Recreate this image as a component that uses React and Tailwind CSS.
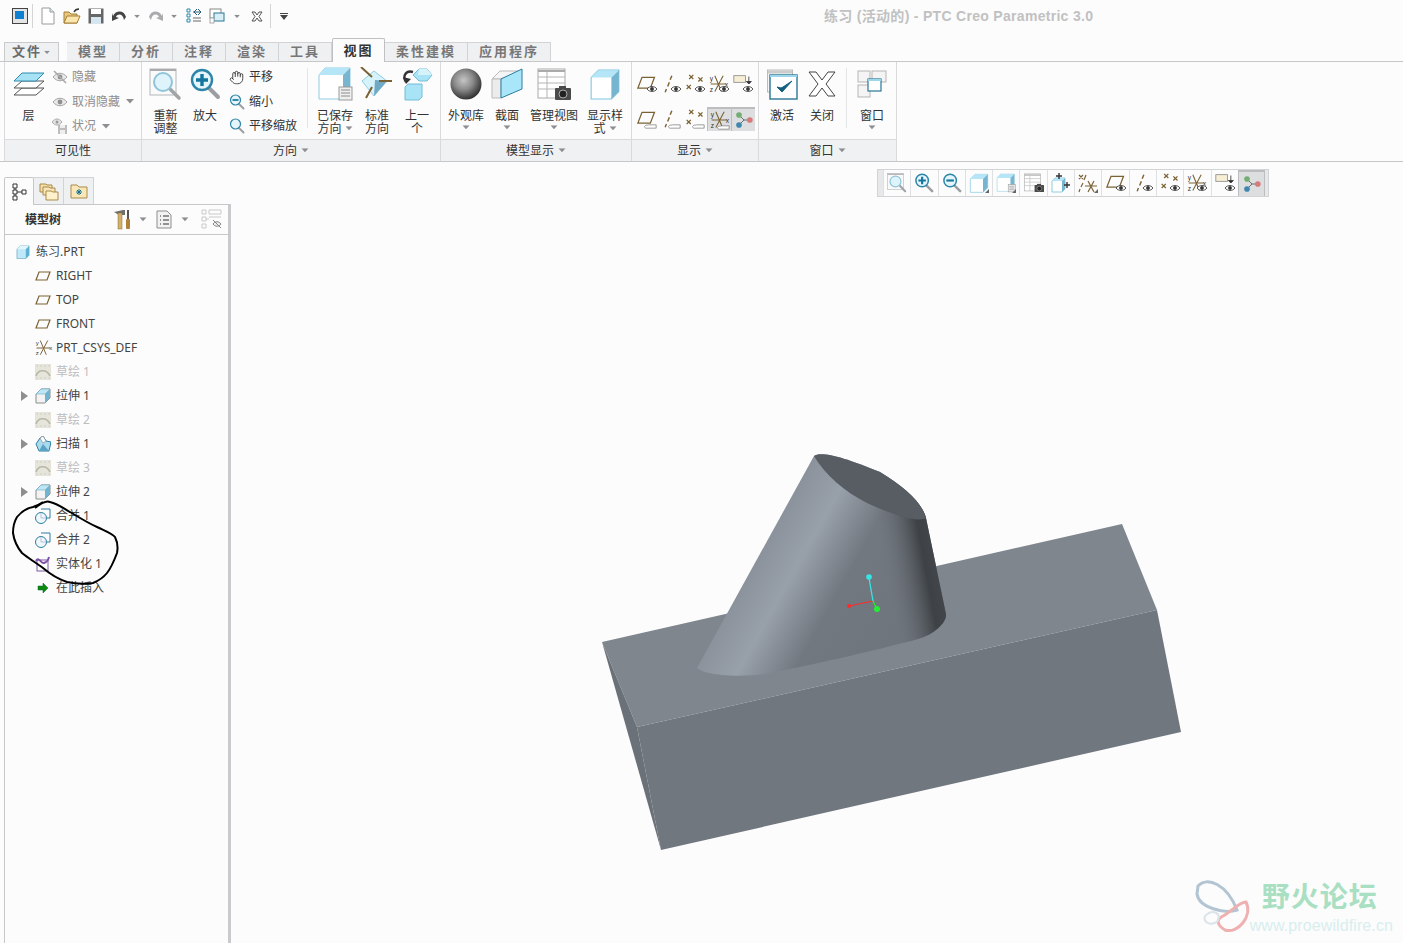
import { Hand } from "lucide-react"

const cjk = { fontFamily: '"Noto Sans", "Noto Sans CJK SC", sans-serif' }
const BROWN = "#7b6234"

function Caret({ className = "" }) {
  return (
    <svg width="8" height="5" viewBox="0 0 8 5" className={className}>
      <path d="M0 0h8L4 4.5z" fill="#8c8e91" />
    </svg>
  )
}

function Cube({ size = 30, front = "#fff", top = "#b5e6f8", side = "#76b5d0", stroke = "#7cc4df" }) {
  return (
    <svg width={size} height={size} viewBox="0 0 30 30">
      <path d="M2 9 9 2h19v20l-7 7H2z" fill={front} stroke={stroke} />
      <path d="M2 9 9 2h19l-7 7z" fill={top} />
      <path d="M21 9l7-7v20l-7 7z" fill={side} />
    </svg>
  )
}

/* ---------- toolbar icons ---------- */
function Magnifier({ size = 32, plus, minus }) {
  return (
    <svg width={size} height={size} viewBox="0 0 32 32">
      <path d="M19 19l10 10" stroke="#9b9fa3" strokeWidth="4" strokeLinecap="round" />
      <circle cx="13" cy="12" r="10" fill="#e4f5fb" stroke="#2d86a8" strokeWidth="2.4" />
      {plus && <path d="M13 6v12M7 12h12" stroke="#14769c" strokeWidth="3.4" />}
      {minus && <path d="M7 12h12" stroke="#14769c" strokeWidth="3.4" />}
    </svg>
  )
}

function Refit() {
  return (
    <svg width="33" height="33" viewBox="0 0 33 33">
      <rect x="1" y="1" width="26" height="26" fill="#fafafa" stroke="#b4b6b8" />
      <path d="M1 2h26" stroke="#a9abae" strokeWidth="2" />
      <path d="M20 20l10 10" stroke="#a1a5a8" strokeWidth="3.5" strokeLinecap="round" />
      <circle cx="14" cy="14" r="9" fill="#dff3fa" stroke="#8fc5d9" strokeWidth="2" />
    </svg>
  )
}

function Layers() {
  return (
    <svg width="32" height="26" viewBox="0 0 32 26">
      <path d="M1 24 9 17h22l-8 7z" fill="#fff" stroke="#555" />
      <path d="M1 17 9 10h22l-8 7z" fill="#fff" stroke="#555" />
      <path d="M1 10 9 2h22l-8 8z" fill="#a8e3f5" stroke="#2d8cb0" />
    </svg>
  )
}

function GrayEye({ slash }) {
  return (
    <svg width="16" height="14" viewBox="0 0 16 14">
      <path d="M1 7c4-5 10-5 14 0-4 5-10 5-14 0z" fill="#e8e8e8" stroke="#a5a5a5" />
      <circle cx="8" cy="7" r="2.4" fill="#8f8f8f" />
      {slash && <path d="M2 1l12 12" stroke="#a9a9a9" strokeWidth="1.6" />}
    </svg>
  )
}

function StatusIcon() {
  return (
    <svg width="16" height="16" viewBox="0 0 16 16">
      <path d="M0 4c3-4 7-4 10 0-3 4-7 4-10 0z" fill="#e5e5e5" stroke="#aaa" />
      <circle cx="5" cy="4" r="1.5" fill="#999" />
      <rect x="6" y="7" width="9" height="9" fill="#bdbdbd" />
      <rect x="8" y="7" width="5" height="3" fill="#eee" />
      <rect x="8" y="12" width="5" height="4" fill="#eee" />
    </svg>
  )
}

function SavedOrient() {
  return (
    <svg width="36" height="34" viewBox="0 0 36 34">
      <path d="M2 8 8 1h25v24l-7 7H2z" fill="#fff" stroke="#8fcce3" />
      <path d="M2 8 8 1h25l-7 7z" fill="#b5e6f8" />
      <path d="M26 8l7-7v24l-7 7z" fill="#79b5cf" />
      <rect x="22" y="20" width="13" height="13" fill="#efefef" stroke="#9a9a9a" />
      <path d="M24 23h9M24 26h9M24 29h9" stroke="#8b8b8b" />
    </svg>
  )
}

function StandardOrient() {
  return (
    <svg width="36" height="34" viewBox="0 0 36 34">
      <path d="M15 4 28 14 15 29 3 14z" fill="#d6f2fb" stroke="#8fcce3" />
      <path d="M16 13l12 1-13 15z" fill="#6fa9c3" />
      <path d="M2 0l11 10M20 14h13M13 20 7 31" stroke={BROWN} strokeWidth="2" />
    </svg>
  )
}

function PrevOrient() {
  return (
    <svg width="32" height="34" viewBox="0 0 32 34">
      <path d="M12 8l6-6h8l5 6-5 6h-8z" fill="#a9e3f6" stroke="#72bcd8" />
      <path d="M18 2l8 0 5 6h-14z" fill="#d6f2fb" />
      <path d="M4 20l3-3h14v13l-3 3H4z" fill="#a9e3f6" stroke="#72bcd8" />
      <path d="M5 15C1 9 5 3 12 5" fill="none" stroke="#333" strokeWidth="2.4" />
      <path d="M2 10l3 7 5-5z" fill="#333" />
    </svg>
  )
}

function Sphere() {
  return (
    <svg width="32" height="32" viewBox="0 0 32 32">
      <defs>
        <radialGradient id="sphere" cx="0.42" cy="0.38" r="0.62">
          <stop offset="0" stopColor="#c5c5c5" />
          <stop offset="0.5" stopColor="#8a8a8a" />
          <stop offset="1" stopColor="#333" />
        </radialGradient>
      </defs>
      <circle cx="16" cy="16" r="15.5" fill="url(#sphere)" />
    </svg>
  )
}

function SectionBox() {
  return (
    <svg width="32" height="32" viewBox="0 0 32 32">
      <path d="M1 11 9 3h22L9 11z" fill="#f5f5f5" stroke="#bbb" />
      <path d="M1 11h9v19H1z" fill="#ececec" stroke="#bbb" />
      <path d="M10 11 31 1v20L10 30z" fill="#a9e6fa" stroke="#2c7f9f" />
    </svg>
  )
}

function ManageViews() {
  return (
    <svg width="34" height="33" viewBox="0 0 34 33">
      <rect x="1" y="1" width="27" height="29" fill="#fff" stroke="#aaa" />
      <path d="M1 3h27" stroke="#aaa" strokeWidth="2" />
      <path d="M1 9h27M1 15h27M1 21h27M10 4v26" stroke="#b5b5b5" />
      <rect x="18" y="20" width="16" height="12" rx="1" fill="#4a4a4a" />
      <rect x="22" y="18" width="7" height="3" fill="#4a4a4a" />
      <circle cx="26" cy="26" r="4" fill="#222" stroke="#aaa" />
    </svg>
  )
}

function Activate() {
  return (
    <svg width="31" height="31" viewBox="0 0 31 31">
      <rect x="0.5" y="1" width="25" height="22" fill="#f5f5f5" stroke="#bbb" />
      <path d="M1 3h24" stroke="#ccc" strokeWidth="3" />
      <rect x="3" y="6" width="27" height="24" fill="#fff" stroke="#2b7796" strokeWidth="1.4" />
      <path d="M3 7h27" stroke="#9cd6ea" strokeWidth="2" />
      <path d="M10 18l5 5 10-11-9 6-2 1z" fill="#135f80" stroke="#135f80" />
    </svg>
  )
}

function CloseX() {
  return (
    <svg width="28" height="26" viewBox="0 0 28 26">
      <path d="M1 1h7l6 8 6-8h7l-9 12 9 12h-7l-6-8-6 8H1l9-12z" fill="#fff" stroke="#444" />
    </svg>
  )
}

function WindowPanes() {
  return (
    <svg width="30" height="28" viewBox="0 0 30 28">
      <rect x="1" y="1" width="12" height="11" fill="#f4f4f4" stroke="#b5b5b5" />
      <rect x="15" y="1" width="14" height="11" fill="#f4f4f4" stroke="#b5b5b5" />
      <rect x="1" y="15" width="12" height="12" fill="#f4f4f4" stroke="#b5b5b5" />
      <rect x="11" y="9" width="13" height="12" fill="#fff" stroke="#2b7796" strokeWidth="1.2" />
      <path d="M11 10h13" stroke="#9cd6ea" strokeWidth="2" />
    </svg>
  )
}

function CubeArrows() {
  return (
    <svg width="20" height="20" viewBox="0 0 20 20">
      <path d="M1 8l3-3h10v11l-3 3H1z" fill="#fff" stroke="#8fcce3" />
      <path d="M1 8l3-3h10l-3 3z" fill="#b5e6f8" />
      <path d="M11 8l3-3v11l-3 3z" fill="#79b5cf" />
      <path d="M8 0v6M5 3h6M13 12h6M16 9v6" stroke="#333" strokeWidth="1.4" />
    </svg>
  )
}

function ComboGlyph() {
  return (
    <svg width="20" height="20" viewBox="0 0 20 20">
      <path d="M1 2l4 4M5 2 1 6M8 2 6 7M5 10l-2 4M2 16l-1 3M10 8l6 11M16 8 10 19M7 13h12" stroke={BROWN} strokeWidth="1.200" />
    </svg>
  )
}

/* display toggles, also used in the floating bar */
function Overlay({ kind }) {
  if (kind === "eye")
    return (
      <g>
        <path d="M12 18c3-4 9-4 12 0-3 4-9 4-12 0z" fill="#fff" stroke="#333" />
        <circle cx="18" cy="18" r="2.300" fill="#333" />
      </g>
    )
  if (kind === "sketch")
    return <path d="M9 21c2-3 4-1 5-2h9v4H13c-2 0-3 1-4-2z" fill="#fff" stroke="#7d7d7d" strokeWidth="0.9" />
  return null
}

const GLYPH = 20

function PlaneGlyph({ o }) {
  return (
    <svg width={GLYPH} height={GLYPH} viewBox="0 0 24 24">
      <path d="M1 17 6 4h15l-5 13z" fill="none" stroke={BROWN} strokeWidth="1.500" />
      <Overlay kind={o} />
    </svg>
  )
}

function AxisGlyph({ o }) {
  return (
    <svg width={GLYPH} height={GLYPH} viewBox="0 0 24 24">
      <path d="M13 2l-2 5M10 10l-2 5M6.500 18 5 22" stroke={BROWN} strokeWidth="1.700" />
      <Overlay kind={o} />
    </svg>
  )
}

function PointsGlyph({ o }) {
  return (
    <svg width={GLYPH} height={GLYPH} viewBox="0 0 24 24">
      <path d="M5 1l5 5M10 1 5 6M16 4l5 5M21 4l-5 5M2 13l5 5M7 13l-5 5" stroke={BROWN} strokeWidth="1.500" />
      <Overlay kind={o} />
    </svg>
  )
}

function CsysGlyph({ o, size = GLYPH }) {
  return (
    <svg width={size} height={size} viewBox="0 0 24 24">
      <path d="M7 2l8 19M17 2 7 21M2 12h18" stroke={BROWN} strokeWidth="1.300" />
      <text x="1" y="8" fontSize="8" fontFamily="Liberation Sans" fill="#333">y</text>
      <text x="19" y="15" fontSize="8" fontFamily="Liberation Sans" fill="#333">x</text>
      <text x="1" y="21" fontSize="8" fontFamily="Liberation Sans" fill="#333">z</text>
      <Overlay kind={o} />
    </svg>
  )
}

function NoteGlyph({ o }) {
  return (
    <svg width={GLYPH} height={GLYPH} viewBox="0 0 24 24">
      <rect x="1" y="2" width="14" height="8" fill="#f8eed5" stroke="#8b8b8b" />
      <path d="M19 3v6M16 9h6l-3 3z" stroke="#333" fill="#333" />
      <Overlay kind={o} />
    </svg>
  )
}

function NodesGlyph() {
  return (
    <svg width={GLYPH} height={GLYPH} viewBox="0 0 24 24">
      <path d="M6 6l6 6h8M12 12l-6 6" stroke="#555" fill="none" />
      <circle cx="6" cy="6" r="3.400" fill="#74ad74" />
      <circle cx="19" cy="12" r="3.400" fill="#d87a7a" />
      <circle cx="6" cy="18" r="3.400" fill="#3f87ad" />
    </svg>
  )
}

/* ---------- quick access bar ---------- */
function QuickBar() {
  return (
    <div className="h-8 flex items-center pl-3 bg-[#fcfcfc]">
      <div className="w-[16px] h-[16px] border border-[#444] p-[2px] bg-[#e4e4e4] mr-[4px]">
        <div className="w-[9px] h-[8px] bg-[#0f7fd0]" />
      </div>
      <div className="w-px h-6 bg-[#d5d5d5] mr-[7px]" />
      <div className="flex items-center gap-[7px]">
        <svg width="16" height="18" viewBox="0 0 16 18">
          <path d="M2 1h8l4 4v12H2z" fill="#fff" stroke="#9a9a9a" />
          <path d="M10 1v4h4" fill="#d7eaf3" stroke="#9a9a9a" />
        </svg>
        <svg width="18" height="16" viewBox="0 0 18 16">
          <path d="M1 15V4h5l2 2h6v9z" fill="#e8c77e" stroke="#a47f35" />
          <path d="M1 15l3-7h13l-3 7z" fill="#fbe7ad" stroke="#a47f35" />
          <path d="M11 4c1-2 3-3 5-3" stroke="#333" fill="none" strokeWidth="1.5" />
        </svg>
        <svg width="16" height="16" viewBox="0 0 16 16">
          <rect x="0.500" y="0.500" width="15" height="15" fill="#666" />
          <rect x="3" y="1" width="10" height="5" fill="#fff" />
          <rect x="3" y="9" width="10" height="7" fill="#d5e6ee" />
        </svg>
        <svg width="16" height="14" viewBox="0 0 16 14">
          <path d="M2 7c3-6 11-6 13 1l-2 3C12 5 7 4 5 8l3 1-7 3V4z" fill="#444" />
        </svg>
      </div>
      <Caret className="ml-[6px] scale-75" />
      <svg width="16" height="14" viewBox="0 0 16 14" className="ml-[7px]">
        <path d="M14 7C11 1 3 1 1 8l2 3C4 5 9 4 11 8L8 9l7 3V4z" fill="#a9abad" />
      </svg>
      <Caret className="ml-[6px] scale-75" />
      <svg width="16" height="16" viewBox="0 0 16 16" className="ml-[8px]">
        <path d="M1 1h3v3H1zM1 6h3v3H1zM1 11h3v3H1z" fill="#fff" stroke="#2b86ad" />
        <path d="M7 13h8M7 10h8" stroke="#666" />
        <path d="M7 4h8M11 1l-3 3 3 3M12 1l3 3-3 3" stroke="#2b5f78" fill="none" />
      </svg>
      <svg width="16" height="16" viewBox="0 0 16 16" className="ml-[7px]">
        <rect x="1" y="1" width="11" height="9" fill="#fff" stroke="#888" />
        <rect x="5" y="5" width="10" height="8" fill="#d9eff7" stroke="#2b7796" />
        <rect x="1" y="10" width="4" height="5" fill="#fff" stroke="#aaa" />
      </svg>
      <Caret className="ml-[8px] scale-75" />
      <svg width="12" height="11" viewBox="0 0 12 11" className="ml-[10px]">
        <path d="M1 1h3l2 3 2-3h3L8 5.500 11 10H8L6 7l-2 3H1l3-4.500z" fill="#fff" stroke="#555" />
      </svg>
      <div className="w-px h-6 bg-[#d5d5d5] ml-[7px] mr-[9px]" />
      <svg width="8" height="7" viewBox="0 0 8 7">
        <path d="M0 0h8v1H0zM0 2h8L4 7z" fill="#444" />
      </svg>
      <span className="ml-[536px] text-sm font-bold text-[#c1c1c1] tracking-[0.3px] whitespace-nowrap" style={{ fontFamily: '"Liberation Sans", "Noto Sans CJK SC", sans-serif' }}>
        练习 (活动的) - PTC Creo Parametric 3.0
      </span>
    </div>
  )
}

/* ---------- ribbon ---------- */
const tabs = ["模型", "分析", "注释", "渲染", "工具"]

function TabStrip() {
  return (
    <div className="h-[29px] flex items-end pl-[4px] text-[13px] font-bold tracking-[2px] text-[#777]">
      <div className="relative z-10 w-[55px] h-[19px] bg-[#eff0f2] border border-b-0 border-[#c9cacc] flex items-center justify-center gap-[1px] text-[#6a6a6a]">
        文件<Caret className="scale-75" />
      </div>
      <div className="w-[8px]" />
      {tabs.map((t) => (
        <div key={t} className="w-[53px] h-[19px] bg-[#eff0f2] border border-b-0 border-l-0 first:border-l border-[#d2d3d5] flex items-center justify-center">
          {t}
        </div>
      ))}
      <div className="relative z-10 w-[53px] h-[24px] -mb-px bg-[#fcfcfc] border border-b-0 border-[#bfc0c2] rounded-t-[2px] flex items-center justify-center text-[#333]">
        视图
      </div>
      <div className="w-[83px] h-[19px] bg-[#eff0f2] border border-b-0 border-l-0 border-[#d2d3d5] flex items-center justify-center">柔性建模</div>
      <div className="w-[83px] h-[19px] bg-[#eff0f2] border border-b-0 border-l-0 border-[#d2d3d5] flex items-center justify-center">应用程序</div>
    </div>
  )
}

function BigButton({ w, icon, lines, caret, inlineCaret }) {
  return (
    <div className={`${w} shrink-0 flex flex-col items-center pt-[2px]`}>
      <div className="h-[40px] flex items-center justify-center">{icon}</div>
      <div className="text-xs leading-[13px] text-center text-[#333] mt-[5px] whitespace-nowrap">
        {lines.map((l, i) => (
          <div key={l} className="flex items-center justify-center gap-[3px]">
            {l}
            {inlineCaret && i === lines.length - 1 && <Caret className="scale-90" />}
          </div>
        ))}
      </div>
      {caret && <Caret className="mt-[3px] scale-90" />}
    </div>
  )
}

function SmallRow({ icon, label, caret, gray }) {
  return (
    <div className={`h-[24.500px] flex items-center text-xs ${gray ? "text-[#8e8e8e]" : "text-[#333]"}`}>
      <span className="w-[20px] flex items-center">{icon}</span>
      <span className="whitespace-nowrap">{label}</span>
      {caret && <Caret className="ml-[6px]" />}
    </div>
  )
}

function RibbonGroup({ w, title, caret, children }) {
  return (
    <div className={`${w} shrink-0 flex flex-col border-r border-[#d9dadc]`}>
      <div className="h-[77px] flex">{children}</div>
      <div className="h-[22px] bg-[#f0f1f3] border-t border-[#d9dadc] flex items-center justify-center gap-[4px] text-xs text-[#333]">
        {title}
        {caret && <Caret className="scale-90" />}
      </div>
    </div>
  )
}

const Divider = () => <div className="w-px h-[60px] mt-[6px] bg-[#e4e5e6]" />

function GlyphCell({ active, children }) {
  return (
    <div className={`w-[24px] h-[24px] shrink-0 flex items-center justify-center ${active ? "bg-[#dddee0] border-t-2 border-l border-[#bcbdbf]" : ""}`}>
      {children}
    </div>
  )
}

function Ribbon() {
  return (
    <div className="flex pl-[4px] border-t border-b border-[#c6c7c9] bg-[#fcfcfc]">
      <div className="flex border-l border-[#d9dadc]">
        <RibbonGroup w="w-[137px]" title="可见性">
          <BigButton w="w-[47px]" icon={<Layers />} lines={["层"]} />
          <div className="pt-[3px]">
            <SmallRow gray icon={<GrayEye slash />} label="隐藏" />
            <SmallRow gray icon={<GrayEye />} label="取消隐藏" caret />
            <SmallRow gray icon={<StatusIcon />} label="状况" caret />
          </div>
        </RibbonGroup>
        <RibbonGroup w="w-[299px]" title="方向" caret>
          <div className="w-[6px]" />
          <BigButton w="w-[35px]" icon={<Refit />} lines={["重新", "调整"]} />
          <div className="w-[5px]" />
          <BigButton w="w-[34px]" icon={<Magnifier plus />} lines={["放大"]} />
          <div className="w-[7px]" />
          <div className="w-[78px] pt-[3px]">
            <SmallRow icon={<Hand size={15} strokeWidth={1.4} color="#333" />} label="平移" />
            <SmallRow icon={<Magnifier size={16} minus />} label="缩小" />
            <SmallRow icon={<Magnifier size={16} />} label="平移缩放" />
          </div>
          <Divider />
          <div className="w-[6px]" />
          <BigButton w="w-[42px]" icon={<SavedOrient />} lines={["已保存", "方向"]} inlineCaret />
          <div className="w-[3px]" />
          <BigButton w="w-[36px]" icon={<StandardOrient />} lines={["标准", "方向"]} />
          <div className="w-[4px]" />
          <BigButton w="w-[36px]" icon={<PrevOrient />} lines={["上一", "个"]} />
        </RibbonGroup>
        <RibbonGroup w="w-[191px]" title="模型显示" caret>
          <div className="w-[5px]" />
          <BigButton w="w-[40px]" icon={<Sphere />} lines={["外观库"]} caret />
          <BigButton w="w-[42px]" icon={<SectionBox />} lines={["截面"]} caret />
          <BigButton w="w-[52px]" icon={<ManageViews />} lines={["管理视图"]} caret />
          <BigButton w="w-[50px]" icon={<Cube size={32} />} lines={["显示样", "式"]} inlineCaret />
        </RibbonGroup>
        <RibbonGroup w="w-[127px]" title="显示" caret>
          <div className="pl-[3px] pt-[10px]">
            <div className="flex h-[24px]">
              <GlyphCell><PlaneGlyph o="eye" /></GlyphCell>
              <GlyphCell><AxisGlyph o="eye" /></GlyphCell>
              <GlyphCell><PointsGlyph o="eye" /></GlyphCell>
              <GlyphCell><CsysGlyph o="eye" /></GlyphCell>
              <GlyphCell><NoteGlyph o="eye" /></GlyphCell>
            </div>
            <div className="flex h-[24px] mt-[11px]">
              <GlyphCell><PlaneGlyph o="sketch" /></GlyphCell>
              <GlyphCell><AxisGlyph o="sketch" /></GlyphCell>
              <GlyphCell><PointsGlyph o="sketch" /></GlyphCell>
              <GlyphCell active><CsysGlyph o="sketch" /></GlyphCell>
              <GlyphCell active><NodesGlyph /></GlyphCell>
            </div>
          </div>
        </RibbonGroup>
        <RibbonGroup w="w-[138px]" title="窗口" caret>
          <div className="w-[3px]" />
          <BigButton w="w-[40px]" icon={<Activate />} lines={["激活"]} />
          <BigButton w="w-[40px]" icon={<CloseX />} lines={["关闭"]} />
          <div className="w-[4px]" />
          <Divider />
          <div className="w-[5px]" />
          <BigButton w="w-[40px]" icon={<WindowPanes />} lines={["窗口"]} caret />
        </RibbonGroup>
      </div>
    </div>
  )
}

/* ---------- model tree ---------- */
function Sketch() {
  return (
    <svg width="16" height="16" viewBox="0 0 16 16">
      <rect width="16" height="16" fill="#e6e5dc" />
      <path d="M2 2h.1M6 2h.1M10 2h.1M14 2h.1M2 14h.1M6 14h.1M10 14h.1M14 14h.1" stroke="#b5b3a5" strokeWidth="1" strokeLinecap="round" />
      <path d="M1 12C3 5 12 5 15 12" fill="none" stroke="#b9b7a6" strokeWidth="1.6" />
    </svg>
  )
}

function Extrude() {
  return (
    <svg width="16" height="16" viewBox="0 0 16 16">
      <path d="M1 6l5-5h9v9l-5 5H1z" fill="#f3f3f3" stroke="#8c8c8c" />
      <path d="M1 6l5-5h9L10 6z" fill="#bfe6f4" stroke="#6daecb" strokeWidth="0.6" />
      <path d="M10 6l5-5v9l-5 5z" fill="#70b4d2" />
    </svg>
  )
}

function Sweep() {
  return (
    <svg width="16" height="16" viewBox="0 0 16 16">
      <path d="M5 2l3-2 3 5 5 1-2 9H4L1 8z" fill="#a8dbee" stroke="#2b7f9f" />
      <path d="M5 2l3-2 3 5-3 2z" fill="#fff" stroke="#888" strokeWidth="0.6" />
      <path d="M8 8l6 7H4z" fill="#5aa3c4" />
    </svg>
  )
}

function Merge() {
  return (
    <svg width="16" height="16" viewBox="0 0 16 16">
      <path d="M6 1h9v9H10" fill="none" stroke="#2b7f9f" />
      <circle cx="6" cy="10" r="5.500" fill="#eef7fb" stroke="#2b7f9f" />
      <path d="M6 10V4.500M6 10h5.500" stroke="#aac" strokeWidth="0.7" />
    </svg>
  )
}

function Solidify() {
  return (
    <svg width="16" height="16" viewBox="0 0 16 16">
      <rect x="2" y="4" width="11" height="11" fill="#fff" stroke="#7d5aa5" />
      <path d="M1 5c3-5 5 3 8 2s4-2 5-6" fill="none" stroke="#7d4fa5" strokeWidth="2" />
    </svg>
  )
}

function Expander() {
  return (
    <svg width="8" height="10" viewBox="0 0 8 10">
      <path d="M0 0l7 5-7 5z" fill="#8f8f8f" />
    </svg>
  )
}

function DatumPlane() {
  return (
    <svg width="16" height="10" viewBox="0 0 16 10">
      <path d="M1 9l3-8h11l-3 8z" fill="none" stroke={BROWN} strokeWidth="1.200" />
    </svg>
  )
}

const treeRows = [
  { label: "RIGHT", icon: <DatumPlane /> },
  { label: "TOP", icon: <DatumPlane /> },
  { label: "FRONT", icon: <DatumPlane /> },
  { label: "PRT_CSYS_DEF", icon: <CsysGlyph size={18} /> },
  { label: "草绘 1", icon: <Sketch />, off: true },
  { label: "拉伸 1", icon: <Extrude />, open: true },
  { label: "草绘 2", icon: <Sketch />, off: true },
  { label: "扫描 1", icon: <Sweep />, open: true },
  { label: "草绘 3", icon: <Sketch />, off: true },
  { label: "拉伸 2", icon: <Extrude />, open: true },
  { label: "合并 1", icon: <Merge /> },
  { label: "合并 2", icon: <Merge /> },
  { label: "实体化 1", icon: <Solidify /> },
  {
    label: "在此插入",
    icon: (
      <svg width="12" height="12" viewBox="0 0 12 12" className="ml-[2px]">
        <path d="M1 4h5V1l5 5-5 5V8H1z" fill="#0c8a0c" stroke="#063" strokeWidth="0.5" />
      </svg>
    ),
  },
]

function TreeRow({ row }) {
  return (
    <div className="h-[24px] flex items-center pl-[16px] text-xs">
      <span className="w-[14px] flex">{row.open && <Expander />}</span>
      <span className="w-[21px] flex items-center">{row.icon}</span>
      <span className={row.off ? "text-[#bdbdbd]" : "text-[#444]"}>{row.label}</span>
    </div>
  )
}

function NavTabs() {
  return (
    <div className="h-[28px] shrink-0 flex pl-[4px] items-end">
      <div className="relative z-10 w-[30px] h-[28px] -mb-px bg-[#fcfcfc] border border-b-0 border-[#c6c7c9] rounded-t-[2px] flex items-center justify-center">
        <svg width="15" height="18" viewBox="0 0 15 18">
          <path d="M1 1h4v4H1zM1 7h4v4H1zM1 13h4v4H1zM10 7h4v4h-4zM3 5v2M3 11v2M5 9h5" fill="#fff" stroke="#333" />
        </svg>
      </div>
      <div className="w-[30px] h-[27px] bg-[#eff0f2] border border-b-0 border-l-0 border-[#d2d3d5] flex items-center justify-center">
        <svg width="20" height="19" viewBox="0 0 20 19">
          <path d="M1 10V2h6l1 1h5v7z" fill="#f4dfaa" stroke="#a98b4b" />
          <path d="M4 13V5h6l1 1h5v7z" fill="#f7e6b8" stroke="#a98b4b" />
          <path d="M7 18V9h5l2 1h5v8z" fill="#fff1cb" stroke="#a98b4b" />
        </svg>
      </div>
      <div className="w-[30px] h-[27px] bg-[#eff0f2] border border-b-0 border-l-0 border-[#d2d3d5] flex items-center justify-center">
        <svg width="18" height="15" viewBox="0 0 18 15">
          <path d="M1 14V1h6l2 2h8v11z" fill="#f9e7b7" stroke="#a98b4b" />
          <path d="M9 5v6M6 8h6M7 6l4 4M11 6l-4 4" stroke="#0f6f93" />
        </svg>
      </div>
    </div>
  )
}

function ModelTreePanel() {
  return (
    <div className="w-[231px] shrink-0 flex flex-col pt-[14px]">
      <NavTabs />
      <div className="relative flex-1 ml-[4px] border-l border-t border-[#c6c7c9] border-r-[3px] border-r-[#c8cacd] bg-[#fcfcfc]">
        <div className="h-[30px] flex items-center border-b border-[#c6c7c9]">
          <span className="ml-[20px] text-xs font-bold text-[#333] w-[88px]">模型树</span>
          <svg width="20" height="21" viewBox="0 0 20 21">
            <path d="M1 3l9-2h2v5H6z" fill="#6f6f6f" />
            <rect x="5" y="4" width="4" height="16" fill="#d2b06d" stroke="#8c6c2e" strokeWidth="0.5" />
            <rect x="14" y="1" width="2" height="9" fill="#555" />
            <rect x="13" y="10" width="4" height="10" rx="1" fill="#b0813b" />
          </svg>
          <Caret className="ml-[6px] scale-90" />
          <svg width="16" height="19" viewBox="0 0 16 19" className="ml-[9px]">
            <path d="M1 1h10l4 4v13H1z" fill="#f2f2f2" stroke="#8d8d8d" />
            <path d="M4 6h1M7 6h6M4 10h1M7 10h6M4 14h1M7 14h6" stroke="#333" />
          </svg>
          <Caret className="ml-[9px] scale-90" />
          <svg width="21" height="21" viewBox="0 0 21 21" className="ml-[12px]">
            <path d="M1 1h4v4H1zM1 8h4v4H1zM1 15h4v4H1zM8 1h12v4H8zM8 8h12M5 10h3" fill="none" stroke="#c9c9c9" />
            <path d="M12 15c2-3 6-3 8 0-2 3-6 3-8 0z" fill="#eee" stroke="#888" />
            <path d="M12 11l8 8" stroke="#888" />
          </svg>
        </div>
        <div className="pt-[5px]">
          <div className="h-[24px] flex items-center pl-[11px] text-xs text-[#444]">
            <span className="w-[20px]"><Cube size={14} front="#bfe9f8" top="#e4f6fc" side="#5cb0d4" stroke="#2b86ad" /></span>
            练习.PRT
          </div>
          {treeRows.map((row) => (
            <TreeRow key={row.label} row={row} />
          ))}
        </div>
        {/* hand drawn ring round the merge features */}
        <svg className="absolute left-[-5px] top-[-205px] pointer-events-none" width="140" height="800" viewBox="0 0 140 800">
          <path
            d="M35 508C40 504 46 500 50 502C58 504 63 508 70 512C80 518 88 523 97 527C105 531 112 533 115 537C118 543 118 548 117 553C114 561 111 568 107 573C103 578 98 581 93 583C85 584 76 584 67 582C58 579 50 574 43 568C35 562 28 558 22 553C17 547 14 540 13 533C13 527 14 522 17 517C21 512 27 508 33 507C36 506 40 504 43 502"
            fill="none"
            stroke="#000"
            strokeWidth="2"
          />
        </svg>
      </div>
    </div>
  )
}

/* ---------- graphics window ---------- */
function FloatCell({ corner, children }) {
  return (
    <div className="relative w-[27.300px] flex items-center justify-center border-l border-[#dfe0e2] [&>svg]:max-w-[20px] [&>svg]:max-h-[20px]">
      {children}
      {corner && <span className="absolute right-[3px] bottom-[3px] w-0 h-0 border-l-[4px] border-l-transparent border-b-[4px] border-b-[#666]" />}
    </div>
  )
}

function FloatingBar() {
  return (
    <div className="ml-[646px] mt-[7px] w-[392px] h-[28px] flex bg-[#fcfcfc] border border-[#d2d3d5]">
      <div className="w-[5px] bg-[#e7e8ea]" />
      <FloatCell><Refit /></FloatCell>
      <FloatCell><Magnifier plus /></FloatCell>
      <FloatCell><Magnifier minus /></FloatCell>
      <FloatCell corner><Cube size={20} /></FloatCell>
      <FloatCell corner><SavedOrient /></FloatCell>
      <FloatCell><ManageViews /></FloatCell>
      <FloatCell><CubeArrows /></FloatCell>
      <FloatCell corner><ComboGlyph /></FloatCell>
      <FloatCell><PlaneGlyph o="eye" /></FloatCell>
      <FloatCell><AxisGlyph o="eye" /></FloatCell>
      <FloatCell><PointsGlyph o="eye" /></FloatCell>
      <FloatCell><CsysGlyph o="eye" /></FloatCell>
      <FloatCell><NoteGlyph o="eye" /></FloatCell>
      <div className="w-[27.300px] flex items-center justify-center bg-[#dddee0] border-x border-t-2 border-[#bcbdbf]">
        <NodesGlyph />
      </div>
      <div className="flex-1 bg-[#e7e8ea]" />
    </div>
  )
}

function PartModel() {
  const cone = "M814 456C820 451 842 456 880 472C905 487 922 503 926 518L946 614C947 622 935 634 918 639C870 652 810 665 770 673C745 678 705 676 697 668Z"
  return (
    <svg className="absolute inset-0 w-full h-full" viewBox="231 162 1172 781">
      <defs>
        <linearGradient id="coneBody" gradientUnits="userSpaceOnUse" x1="748" y1="540" x2="900" y2="625">
          <stop offset="0" stopColor="#858c95" />
          <stop offset="0.32" stopColor="#98a0a9" />
          <stop offset="0.6" stopColor="#727880" />
          <stop offset="1" stopColor="#6f757d" />
        </linearGradient>
        <linearGradient id="coneShade" gradientUnits="userSpaceOnUse" x1="882" y1="560" x2="936" y2="550">
          <stop offset="0" stopColor="#6f757d" stopOpacity="0" />
          <stop offset="0.75" stopColor="#3e4246" />
          <stop offset="1" stopColor="#43474c" />
        </linearGradient>
      </defs>
      <path d="M602 642 1122 524l35 86-520 117z" fill="#7f868e" />
      <path d="M637 727 1157 610l24 122-520 118z" fill="#71777f" />
      <path d="M602 642l35 85 24 123z" fill="#6b7179" />
      <path d={cone} fill="url(#coneBody)" />
      <path d={cone} fill="url(#coneShade)" />
      <path d="M814 456C820 451 842 456 880 472C905 487 922 503 926 518C918 522 900 518 867 503C845 492 825 475 814 456Z" fill="#585d64" />
      <path d="M849 606 873 601" stroke="#ff2a2a" strokeWidth="1.200" />
      <path d="M869 578l4 23" stroke="#35e6e6" strokeWidth="1.300" />
      <path d="M873 601l4 8" stroke="#22ee33" strokeWidth="1.300" />
      <circle cx="849" cy="606" r="2" fill="#ff2a2a" />
      <circle cx="869" cy="577" r="2.800" fill="#35e6e6" />
      <circle cx="877" cy="609" r="3" fill="#22ee33" />
    </svg>
  )
}

function Watermark() {
  return (
    <div className="absolute right-[10px] bottom-[7px] flex items-start">
      <svg width="60" height="58" viewBox="0 0 60 58" className="mr-[-2px] translate-x-[1px]">
        <path d="M5 8C14-2 34 6 44 32C32 36 6 30 4 16z" fill="none" stroke="#b3c5d2" strokeWidth="3" />
        <path d="M53 24C60 38 45 56 32 52C25 48 22 42 30 38C38 34 46 24 53 24z" fill="none" stroke="#eeb0b0" strokeWidth="3" />
        <path d="M12 38C20 30 30 36 24 44C16 48 10 44 12 38z" fill="none" stroke="#dbe3e8" strokeWidth="2" />
      </svg>
      <div className="flex flex-col">
        <span className="pl-[12px] text-[28px] leading-[34px] font-bold text-[#a9dfc2] tracking-[1px]" style={{ fontFamily: '"Noto Sans CJK SC", sans-serif' }}>
          野火论坛
        </span>
        <span className="text-base leading-[20px] mt-[4px] text-[#d8eeee] tracking-[0.1px]" style={{ fontFamily: '"Liberation Sans", sans-serif' }}>
          www.proewildfire.cn
        </span>
      </div>
    </div>
  )
}

function GraphicsArea() {
  return (
    <div className="relative flex-1 bg-[#fcfcfc]">
      <PartModel />
      <div className="relative">
        <FloatingBar />
      </div>
      <Watermark />
    </div>
  )
}

export default function App() {
  return (
    <div className="w-[1403px] h-[943px] overflow-hidden flex flex-col bg-[#fcfcfc]" style={cjk}>
      <QuickBar />
      <TabStrip />
      <Ribbon />
      <div className="flex flex-1 min-h-0 bg-[#fcfcfc]">
        <ModelTreePanel />
        <GraphicsArea />
      </div>
    </div>
  )
}
